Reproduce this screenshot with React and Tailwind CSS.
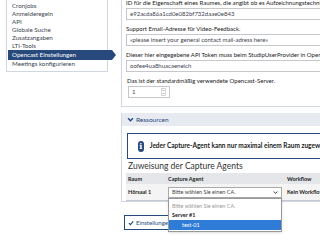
const navItems = [
  'Cronjobs',
  'Anmelderegeln',
  'API',
  'Globale Suche',
  'Zusatzangaben',
  'LTI-Tools',
  'Opencast Einstellungen',
  'Meetings konfigurieren',
];

const fields = [
  {
    label: 'ID für die Eigenschaft eines Raumes, die angibt ob es Aufzeichnungstechnik gibt',
    value: 'e92acda86a1cd0e082bf732daae0e843',
  },
  {
    label: 'Support Email-Adresse für Video-Feedback.',
    value: '«please insert your general contact mail-adress here»',
  },
  {
    label: 'Dieser hier eingegebene API Token muss beim StudipUserProvider in Opencast eingetragen werden.',
    value: 'oofee4ua8huacaeneich',
  },
];

function Sidebar() {
  return (
    <aside className="w-[121px] shrink-0 pl-[6px]">
      <nav className="relative w-[102px] border border-t-0 border-[#d0d7e3] pt-[2px] pb-[3px] px-px text-[6.2px] leading-[8px] text-[#3c434e]">
        {navItems.map((item) =>
          item === 'Opencast Einstellungen' ? (
            <div key={item} className="relative h-[10px] leading-[10px] bg-[#28497c] text-white pl-[4px] whitespace-nowrap">
              {item}
              {/* arrow sticking out of the box */}
              <svg className="absolute left-full top-0 h-[10px] w-[10px]" viewBox="0 0 10 10">
                <path d="M0 0H6L10 5L6 10H0Z" fill="#28497c" />
              </svg>
            </div>
          ) : (
            <div key={item} className="h-[8px] pl-[4px] whitespace-nowrap">
              {item}
            </div>
          )
        )}
      </nav>
    </aside>
  );
}

function Field({ label, value }) {
  return (
    <div className="mb-[5px]">
      <div className="h-[8px] whitespace-nowrap">{label}</div>
      <div className="mt-px h-[12px] border border-[#c5c7ca] px-[3px] flex items-center whitespace-nowrap text-[#3c434e]">
        {value}
      </div>
    </div>
  );
}

function ConfigPanel() {
  return (
    <section className="w-[240px] -mt-[1px] border-l border-b border-[#d0d7e3] pl-[4px] pb-[8px] text-[6px] leading-[8px] text-[#222]">
      {fields.map((f) => (
        <Field key={f.label} {...f} />
      ))}
      <div className="h-[8px] whitespace-nowrap pl-px">Das ist der standardmäßig verwendete Opencast-Server.</div>
      <div className="mt-px ml-[2px] h-[12px] w-[42px] border border-[#c5c7ca] flex items-center justify-between px-[3px] text-[#3c434e]">
        <span>1</span>
        <svg width="5" height="8" viewBox="0 0 5 8">
          <rect x="0.5" y="0.5" width="4" height="7" fill="none" stroke="#bbb" strokeWidth="0.6" />
          <path d="M1.5 3L2.5 2L3.5 3M1.5 5L2.5 6L3.5 5" fill="none" stroke="#888" strokeWidth="0.6" />
        </svg>
      </div>
    </section>
  );
}

function ResourcesPanel() {
  return (
    <section className="w-[240px] mt-[6px] border-l border-b border-[#d0d7e3] text-[6px] leading-[8px] text-[#222]">
      <header className="h-[13px] bg-[#e7ebf1] flex items-center gap-[2px] pl-[5px] text-[#28497c] text-[6.5px]">
        <svg width="7" height="7" viewBox="0 0 10 10">
          <path d="M1.5 3.2L5 6.8L8.5 3.2" fill="none" stroke="#28497c" strokeWidth="2" />
        </svg>
        <span>Ressourcen</span>
      </header>
      <div className="pt-[7px] pl-[4px]">
        <div className="ml-px h-[26px] border border-[#28497c] flex items-center gap-[6px] pl-[10px]">
          <div className="w-[11px] h-[11px] rounded-full bg-[#28497c] flex items-center justify-center text-white font-bold text-[8px] font-['DejaVu_Serif',serif]">
            i
          </div>
          <span className="font-bold text-[6.5px] whitespace-nowrap">
            Jeder Capture-Agent kann nur maximal einem Raum zugewiesen werden.
          </span>
        </div>
        <h2 className="mt-[1px] h-[12px] leading-[12px] text-[8.5px] font-normal pl-[2px] text-[#333]">Zuweisung der Capture Agents</h2>
        <div className="mt-[1px] border-b border-[#c5c9d0]">
          <div className="h-[11px] bg-[#e4e6ea] flex items-center font-bold text-[5.5px]">
            <div className="w-[42px] pl-[2px]">Raum</div>
            <div className="w-[119px]">Capture Agent</div>
            <div>Workflow</div>
          </div>
          <div className="h-[16px] bg-[#f4f4f5] flex items-center text-[5.5px]">
            <div className="w-[42px] pl-[2px] font-bold">Hörsaal 1</div>
            <div className="w-[119px] relative">
              <div className="w-[114px] h-[11px] bg-white border border-[#aaa] flex items-center justify-between pl-[3px] pr-[3px] text-[#444]">
                <span>Bitte wählen Sie einen CA.</span>
                <svg width="5" height="5" viewBox="0 0 10 10">
                  <path d="M1.5 3L5 7L8.5 3" fill="none" stroke="#333" strokeWidth="1.8" />
                </svg>
              </div>
              {/* open dropdown list */}
              <div className="absolute left-0 top-[11px] w-[114px] h-[34px] bg-white border border-[#999] shadow-sm pt-[3px] z-10 text-[5.5px]">
                <div className="h-[9px] pl-[3px] text-[#999]">Bitte wählen Sie einen CA.</div>
                <div className="h-[9px] pl-[3px] font-bold">Server #1</div>
                <div className="h-[10px] leading-[10px] bg-[#2f7bd8] text-white pl-[13px]">test-01</div>
              </div>
            </div>
            <div className="font-bold whitespace-nowrap">Kein Workflow</div>
          </div>
        </div>
      </div>
    </section>
  );
}

export default function App() {
  return (
    <div className="w-[320px] h-[240px] overflow-hidden bg-white font-['Lato',sans-serif] flex">
      <Sidebar />
      <main className="flex-1 min-w-0">
        <ConfigPanel />
        <ResourcesPanel />
        <button className="mt-[13px] ml-[3px] h-[15px] flex items-center gap-[2px] border border-[#28497c] bg-white px-[3px] text-[6px] text-[#28497c]">
          <svg width="6" height="6" viewBox="0 0 10 10">
            <path d="M1.5 5.2L4 7.8L8.8 2.2" fill="none" stroke="#28497c" strokeWidth="1.8" />
          </svg>
          Einstellungen speichern
        </button>
      </main>
    </div>
  );
}
